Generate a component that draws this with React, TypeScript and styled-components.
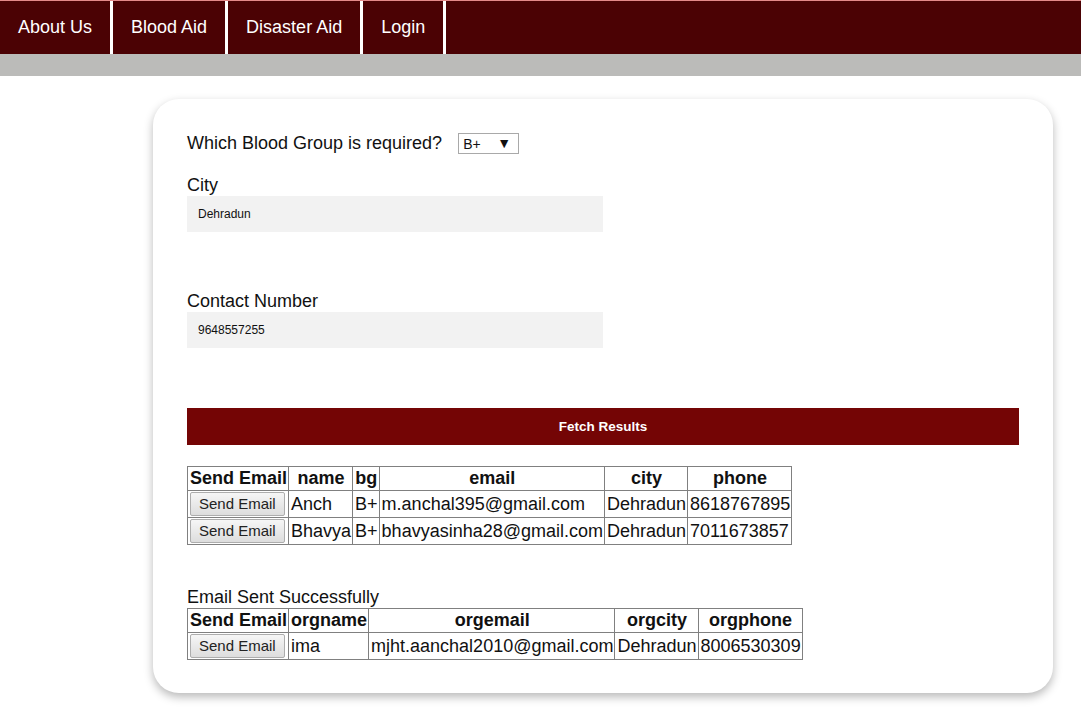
import React from "react";
import styled, { createGlobalStyle } from "styled-components";

const GlobalStyle = createGlobalStyle`
    body {
        margin: 0;
        background: #ffffff;
        font-family: "Liberation Sans", Arial, sans-serif;
        color: #111;
    }
`;

interface Donor {
    name: string;
    bg: string;
    email: string;
    city: string;
    phone: string;
}

interface Org {
    orgname: string;
    orgemail: string;
    orgcity: string;
    orgphone: string;
}

const navItems = ["About Us", "Blood Aid", "Disaster Aid", "Login"];

const donors: Donor[] = [
    { name: "Anch", bg: "B+", email: "m.anchal395@gmail.com", city: "Dehradun", phone: "8618767895" },
    { name: "Bhavya", bg: "B+", email: "bhavyasinha28@gmail.com", city: "Dehradun", phone: "7011673857" },
];

const orgs: Org[] = [
    { orgname: "ima", orgemail: "mjht.aanchal2010@gmail.com", orgcity: "Dehradun", orgphone: "8006530309" },
];

const App: React.FC = () => {
    return (
        <>
            <GlobalStyle />
            <NavBar>
                {navItems.map((item) => (
                    <NavItem key={item}>{item}</NavItem>
                ))}
            </NavBar>
            <SubBar />
            <Card>
                <QuestionRow>
                    <span>Which Blood Group is required?</span>
                    <SelectWrap>
                        <Select defaultValue="B+">
                            <option>A+</option>
                            <option>B+</option>
                            <option>O+</option>
                            <option>AB+</option>
                        </Select>
                        <Arrow>▼</Arrow>
                    </SelectWrap>
                </QuestionRow>

                <Label $top={21}>City</Label>
                <Field defaultValue="Dehradun" />

                <Label $top={59}>Contact Number</Label>
                <Field defaultValue="9648557255" />

                <FetchButton>Fetch Results</FetchButton>

                <Table>
                    <thead>
                        <tr>
                            <Th>Send Email</Th>
                            <Th>name</Th>
                            <Th>bg</Th>
                            <Th>email</Th>
                            <Th>city</Th>
                            <Th>phone</Th>
                        </tr>
                    </thead>
                    <tbody>
                        {donors.map((d) => (
                            <tr key={d.email}>
                                <Td>
                                    <SendButton>Send Email</SendButton>
                                </Td>
                                <Td>{d.name}</Td>
                                <Td>{d.bg}</Td>
                                <Td>{d.email}</Td>
                                <Td>{d.city}</Td>
                                <Td>{d.phone}</Td>
                            </tr>
                        ))}
                    </tbody>
                </Table>

                <Status>Email Sent Successfully</Status>
                <Table $top={0}>
                    <thead>
                        <tr>
                            <Th>Send Email</Th>
                            <Th>orgname</Th>
                            <Th>orgemail</Th>
                            <Th>orgcity</Th>
                            <Th>orgphone</Th>
                        </tr>
                    </thead>
                    <tbody>
                        {orgs.map((o) => (
                            <tr key={o.orgemail}>
                                <Td>
                                    <SendButton>Send Email</SendButton>
                                </Td>
                                <Td>{o.orgname}</Td>
                                <Td>{o.orgemail}</Td>
                                <Td>{o.orgcity}</Td>
                                <Td>{o.orgphone}</Td>
                            </tr>
                        ))}
                    </tbody>
                </Table>
            </Card>
        </>
    );
};

export default App;

const NavBar = styled.nav`
    display: flex;
    height: 54px;
    background: #4b0204;
    border-top: 1px solid #e58a8a;
    box-sizing: border-box;
`;

const NavItem = styled.a`
    display: flex;
    align-items: center;
    padding: 0 18px;
    color: #ffffff;
    font-size: 18px;
    border-right: 3px solid #ffffff;
    cursor: pointer;
`;

const SubBar = styled.div`
    height: 22px;
    background: #bbbbb9;
`;

const Card = styled.div`
    width: 900px;
    box-sizing: border-box;
    margin: 23px 0 16px 153px;
    padding: 34px 34px 33px;
    background: #ffffff;
    border-radius: 26px;
    box-shadow: 0 4px 10px rgba(0, 0, 0, 0.28);
`;

const QuestionRow = styled.div`
    display: flex;
    align-items: center;
    gap: 16px;
    height: 21px;
    font-size: 18px;
`;

const SelectWrap = styled.span`
    position: relative;
    display: inline-block;
`;

const Select = styled.select`
    appearance: none;
    width: 61px;
    height: 21px;
    padding: 0 0 0 4px;
    border: 1px solid #a9a9a9;
    background: #ffffff;
    font-family: "Liberation Sans", Arial, sans-serif;
    font-size: 14px;
    color: #111;
    border-radius: 0;
    box-sizing: border-box;
`;

const Arrow = styled.span`
    position: absolute;
    right: 8px;
    top: 2px;
    font-size: 14px;
    line-height: 16px;
    pointer-events: none;
`;

const Label = styled.label<{ $top: number }>`
    display: block;
    margin-top: ${(p) => p.$top}px;
    font-size: 18px;
    line-height: 21px;
`;

const Field = styled.input`
    display: block;
    width: 416px;
    height: 36px;
    box-sizing: border-box;
    padding: 0 11px;
    border: none;
    background: #f2f2f2;
    font-family: "Liberation Sans", Arial, sans-serif;
    font-size: 12px;
    color: #111;
    outline: none;
`;

const FetchButton = styled.button`
    display: block;
    width: 100%;
    height: 37px;
    margin-top: 60px;
    border: none;
    background: #740505;
    color: #ffffff;
    font-family: "Liberation Sans", Arial, sans-serif;
    font-size: 13.5px;
    font-weight: bold;
    cursor: pointer;
`;

const Table = styled.table<{ $top?: number }>`
    margin-top: ${(p) => (p.$top ?? 21)}px;
    border-collapse: collapse;
    border: 1px solid #808080;
    font-size: 18px;
`;

const Th = styled.th`
    border: 1px solid #808080;
    padding: 1px 1px 1px 2px;
    font-weight: bold;
    line-height: 21px;
`;

const Td = styled.td`
    border: 1px solid #808080;
    padding: 1px 1px 1px 2px;
    line-height: 21px;
`;

const SendButton = styled.button`
    padding: 2px 8px;
    border: 1px solid #adadad;
    border-radius: 2px;
    background: linear-gradient(#f6f6f6, #dddddd);
    font-family: "Liberation Sans", Arial, sans-serif;
    font-size: 15px;
    color: #222;
    line-height: 18px;
    cursor: pointer;
`;

const Status = styled.div`
    margin-top: 42px;
    font-size: 18px;
    line-height: 21px;
`;
